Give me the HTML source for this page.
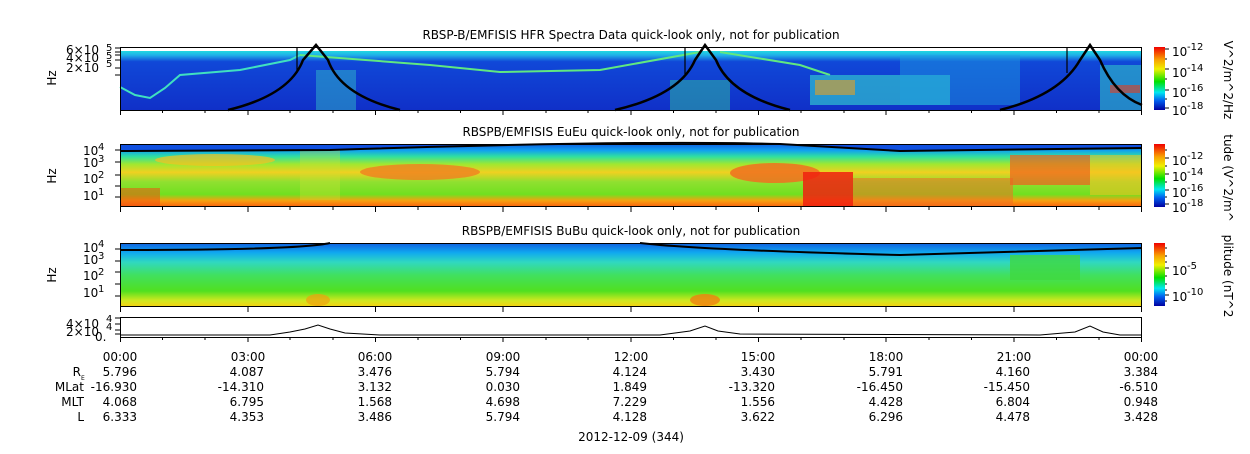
<!DOCTYPE html><html><head><style>body{margin:0;background:#fff;width:1250px;height:449px;overflow:hidden}svg text{font-family:"DejaVu Sans","Liberation Sans",sans-serif;font-size:12px;fill:#000}</style></head><body>
<svg width="1250" height="449" xmlns="http://www.w3.org/2000/svg">
<defs>
<linearGradient id="p1" x1="0" y1="0" x2="0" y2="1"><stop offset="0" stop-color="#20d8e0"/><stop offset=".07" stop-color="#20b0e8"/><stop offset=".18" stop-color="#1048d8"/><stop offset="1" stop-color="#1030c8"/></linearGradient>
<linearGradient id="p2" x1="0" y1="0" x2="0" y2="1"><stop offset="0" stop-color="#1060e0"/><stop offset=".1" stop-color="#10a0f0"/><stop offset=".2" stop-color="#30e0a0"/><stop offset=".32" stop-color="#a0e830"/><stop offset=".45" stop-color="#f0d020"/><stop offset=".6" stop-color="#90e030"/><stop offset=".8" stop-color="#70e020"/><stop offset=".9" stop-color="#f8a010"/><stop offset="1" stop-color="#f86010"/></linearGradient>
<linearGradient id="p3" x1="0" y1="0" x2="0" y2="1"><stop offset="0" stop-color="#1060e0"/><stop offset=".15" stop-color="#10a8f0"/><stop offset=".3" stop-color="#30d8c0"/><stop offset=".5" stop-color="#40e060"/><stop offset=".75" stop-color="#50e020"/><stop offset=".9" stop-color="#d0e820"/><stop offset="1" stop-color="#f8d010"/></linearGradient>
<linearGradient id="cb" x1="0" y1="0" x2="0" y2="1"><stop offset="0" stop-color="#f00000"/><stop offset=".2" stop-color="#f8a000"/><stop offset=".35" stop-color="#f0f000"/><stop offset=".55" stop-color="#00e000"/><stop offset=".72" stop-color="#00e8f0"/><stop offset=".85" stop-color="#0060f0"/><stop offset="1" stop-color="#0000a0"/></linearGradient>
</defs>
<text x="631" y="39" text-anchor="middle">RBSP-B/EMFISIS  HFR Spectra Data quick-look only, not for publication</text>
<text x="631" y="136" text-anchor="middle">RBSPB/EMFISIS  EuEu quick-look only, not for publication</text>
<text x="631" y="235" text-anchor="middle">RBSPB/EMFISIS  BuBu quick-look only, not for publication</text>
<rect x="120" y="51" width="1022" height="59" fill="url(#p1)"/>
<path d="M120 87 L135 95 L150 98 L165 88 L180 75 L240 70 L290 60 L300 55" stroke="#40e0c0" stroke-width="2" fill="none"/>
<path d="M300 55 L430 65 L500 72 L600 70 L700 52" stroke="#60e880" stroke-width="2" fill="none"/>
<path d="M720 52 L800 65 L830 75" stroke="#60e880" stroke-width="2" fill="none"/>
<rect x="810" y="75" width="140" height="30" fill="#30c0d0" opacity=".7"/>
<rect x="815" y="80" width="40" height="15" fill="#e8a020" opacity=".6"/>
<rect x="900" y="55" width="120" height="50" fill="#20a0e0" opacity=".45"/>
<rect x="1100" y="65" width="42" height="45" fill="#30c0c8" opacity=".6"/>
<rect x="1110" y="85" width="30" height="8" fill="#e04020" opacity=".6"/>
<rect x="316" y="70" width="40" height="40" fill="#30b8c8" opacity=".5"/>
<rect x="670" y="80" width="60" height="30" fill="#30c0a0" opacity=".5"/>
<g stroke="#000" stroke-width="2.5" fill="none">
<path d="M228 110 Q290 95 303 60 L316 45 L328 60 Q340 95 400 110"/>
<path d="M615 110 Q680 95 695 60 L705 45 L716 60 Q730 95 790 110"/>
<path d="M1000 110 Q1060 95 1080 60 L1090 45 L1100 60 Q1115 95 1142 105"/>
</g>
<g stroke="#000" stroke-width="1.2"><line x1="297" y1="47" x2="297" y2="73"/><line x1="685" y1="47" x2="685" y2="74"/><line x1="1067" y1="47" x2="1067" y2="73"/></g>
<rect x="120.5" y="47.5" width="1021" height="63" fill="none" stroke="#000"/>
<rect x="120" y="144" width="1022" height="63" fill="url(#p2)"/>
<ellipse cx="420" cy="172" rx="60" ry="8" fill="#f08020" opacity=".8"/>
<ellipse cx="775" cy="173" rx="45" ry="10" fill="#f07020" opacity=".85"/>
<ellipse cx="215" cy="160" rx="60" ry="6" fill="#f8c020" opacity=".7"/>
<rect x="803" y="172" width="50" height="35" fill="#f02010" opacity=".85"/>
<rect x="853" y="178" width="160" height="29" fill="#f07020" opacity=".55"/>
<rect x="1010" y="155" width="80" height="30" fill="#f06020" opacity=".7"/>
<rect x="1090" y="155" width="52" height="40" fill="#f8c020" opacity=".55"/>
<rect x="120" y="188" width="40" height="19" fill="#f05010" opacity=".55"/>
<rect x="300" y="150" width="40" height="50" fill="#d0e030" opacity=".35"/>
<path d="M120 151 L330 150 Q630 140 780 144 L900 151 L1142 148 L1142 144 L120 144Z" fill="#1050e0"/>
<path d="M120 151 L330 150 Q630 140 780 144 L900 151 L1142 148" stroke="#000" stroke-width="2" fill="none"/>
<rect x="120.5" y="144.5" width="1021" height="62" fill="none" stroke="#000"/>
<rect x="120" y="243" width="1022" height="64" fill="url(#p3)"/>
<rect x="1010" y="255" width="70" height="25" fill="#40d840" opacity=".8"/>
<ellipse cx="705" cy="300" rx="15" ry="6" fill="#f08010" opacity=".8"/>
<ellipse cx="318" cy="300" rx="12" ry="6" fill="#f0a010" opacity=".7"/>
<path d="M120 250 Q300 250 330 243 M640 243 Q700 250 900 255 L1142 248" stroke="#000" stroke-width="2" fill="none"/>
<rect x="120.5" y="243.5" width="1021" height="63" fill="none" stroke="#000"/>
<rect x="120.5" y="317.5" width="1021" height="20" fill="none" stroke="#000"/>
<path d="M120 335 L270 335 L290 332 L305 329 L318 325 L330 329 L345 333 L380 335 L660 335 L690 331 L705 326 L718 331 L740 334 L1040 335 L1075 332 L1090 326 L1103 332 L1120 335 L1142 335" stroke="#000" fill="none"/>
<g stroke="#000">
<path d="M120.5 110v5M248 110v5M375.5 110v5M503 110v5M631 110v5M758.5 110v5M886 110v5M1014 110v5M1141.5 110v5M162.5 110v3M205 110v3M290 110v3M333 110v3M418 110v3M460.5 110v3M546 110v3M588 110v3M673.5 110v3M716 110v3M801 110v3M844 110v3M929 110v3M971.5 110v3M1056.5 110v3M1099 110v3"/>
<path d="M120.5 207v5M248 207v5M375.5 207v5M503 207v5M631 207v5M758.5 207v5M886 207v5M1014 207v5M1141.5 207v5M162.5 207v3M205 207v3M290 207v3M333 207v3M418 207v3M460.5 207v3M546 207v3M588 207v3M673.5 207v3M716 207v3M801 207v3M844 207v3M929 207v3M971.5 207v3M1056.5 207v3M1099 207v3"/>
<path d="M120.5 307v5M248 307v5M375.5 307v5M503 307v5M631 307v5M758.5 307v5M886 307v5M1014 307v5M1141.5 307v5"/>
<path d="M120.5 337v5M248 337v5M375.5 337v5M503 337v5M631 337v5M758.5 337v5M886 337v5M1014 337v5M1141.5 337v5M162.5 337v3M205 337v3M290 337v3M333 337v3M418 337v3M460.5 337v3M546 337v3M588 337v3M673.5 337v3M716 337v3M801 337v3M844 337v3M929 337v3M971.5 337v3M1056.5 337v3M1099 337v3"/>
<path d="M115 48h5M115 52h5M115 55h5M115 60h5M115 68h5M115 75h5M115 150h5M115 162h5M115 175h5M115 186h5M115 197h5M115 249h5M115 261h5M115 272h5M115 284h5M115 296h5M115 318h5M115 324h5M115 330h5M115 334h5"/>
</g>
<g>
<text x="66" y="54" style="font-size:12px">6×10</text><text x="66" y="62" style="font-size:12px">4×10</text><text x="66" y="72" style="font-size:12px">2×10</text>
<text x="106" y="51" style="font-size:10px">5</text><text x="106" y="59" style="font-size:10px">5</text><text x="106" y="67" style="font-size:10px">5</text>
<text x="83" y="155">10</text><text x="98" y="150" style="font-size:10px">4</text>
<text x="83" y="167">10</text><text x="98" y="162" style="font-size:10px">3</text>
<text x="83" y="183">10</text><text x="98" y="178" style="font-size:10px">2</text>
<text x="83" y="200">10</text><text x="98" y="195" style="font-size:10px">1</text>
<text x="83" y="252">10</text><text x="98" y="247" style="font-size:10px">4</text>
<text x="83" y="264">10</text><text x="98" y="259" style="font-size:10px">3</text>
<text x="83" y="280">10</text><text x="98" y="275" style="font-size:10px">2</text>
<text x="83" y="297">10</text><text x="98" y="292" style="font-size:10px">1</text>
<text x="66" y="328" style="font-size:12px">4×10</text><text x="66" y="336" style="font-size:12px">2×10</text><text x="95" y="341" style="font-size:12px">0.</text>
<text x="106" y="322" style="font-size:10px">4</text><text x="106" y="330" style="font-size:10px">4</text>
</g>
<text transform="translate(56,78) rotate(-90)" text-anchor="middle">Hz</text>
<text transform="translate(56,176) rotate(-90)" text-anchor="middle">Hz</text>
<text transform="translate(56,275) rotate(-90)" text-anchor="middle">Hz</text>
<rect x="1154" y="47" width="11" height="63" fill="url(#cb)"/>
<rect x="1154" y="144" width="11" height="63" fill="url(#cb)"/>
<rect x="1154" y="243" width="11" height="63" fill="url(#cb)"/>
<g stroke="#000"><path d="M1165 49h4M1165 69h4M1165 90h4M1165 108h4M1165 59h2M1165 79h2M1165 99h2M1165 158h4M1165 174h4M1165 190h4M1165 204h4M1165 150h2M1165 166h2M1165 182h2M1165 197h2M1165 268h4M1165 295h4M1165 248h2M1165 256h2M1165 262h2M1165 276h2M1165 284h2M1165 290h2M1165 301h2"/></g>
<g>
<text x="1172" y="56">10</text><text x="1187" y="50" style="font-size:10px">-12</text>
<text x="1172" y="77">10</text><text x="1187" y="71" style="font-size:10px">-14</text>
<text x="1172" y="97">10</text><text x="1187" y="91" style="font-size:10px">-16</text>
<text x="1172" y="115">10</text><text x="1187" y="109" style="font-size:10px">-18</text>
<text x="1172" y="165">10</text><text x="1187" y="159" style="font-size:10px">-12</text>
<text x="1172" y="181">10</text><text x="1187" y="175" style="font-size:10px">-14</text>
<text x="1172" y="197">10</text><text x="1187" y="191" style="font-size:10px">-16</text>
<text x="1172" y="212">10</text><text x="1187" y="206" style="font-size:10px">-18</text>
<text x="1172" y="275">10</text><text x="1187" y="269" style="font-size:10px">-5</text>
<text x="1172" y="301">10</text><text x="1187" y="295" style="font-size:10px">-10</text>
</g>
<text transform="translate(1224,80) rotate(90)" text-anchor="middle">V^2/m^2/Hz</text>
<text transform="translate(1224,178) rotate(90)" text-anchor="middle">tude (V^2/m^</text>
<text transform="translate(1224,276) rotate(90)" text-anchor="middle">plitude (nT^2</text>
<g text-anchor="middle">
<text x="120" y="361">00:00</text><text x="248" y="361">03:00</text><text x="375" y="361">06:00</text><text x="503" y="361">09:00</text><text x="631" y="361">12:00</text><text x="758" y="361">15:00</text><text x="886" y="361">18:00</text><text x="1014" y="361">21:00</text><text x="1141" y="361">00:00</text>
</g>
<g text-anchor="end">
<text x="137" y="376">5.796</text><text x="264" y="376">4.087</text><text x="392" y="376">3.476</text><text x="520" y="376">5.794</text><text x="647" y="376">4.124</text><text x="775" y="376">3.430</text><text x="903" y="376">5.791</text><text x="1030" y="376">4.160</text><text x="1158" y="376">3.384</text>
<text x="137" y="391">-16.930</text><text x="264" y="391">-14.310</text><text x="392" y="391">3.132</text><text x="520" y="391">0.030</text><text x="647" y="391">1.849</text><text x="775" y="391">-13.320</text><text x="903" y="391">-16.450</text><text x="1030" y="391">-15.450</text><text x="1158" y="391">-6.510</text>
<text x="137" y="406">4.068</text><text x="264" y="406">6.795</text><text x="392" y="406">1.568</text><text x="520" y="406">4.698</text><text x="647" y="406">7.229</text><text x="775" y="406">1.556</text><text x="903" y="406">4.428</text><text x="1030" y="406">6.804</text><text x="1158" y="406">0.948</text>
<text x="137" y="421">6.333</text><text x="264" y="421">4.353</text><text x="392" y="421">3.486</text><text x="520" y="421">5.794</text><text x="647" y="421">4.128</text><text x="775" y="421">3.622</text><text x="903" y="421">6.296</text><text x="1030" y="421">4.478</text><text x="1158" y="421">3.428</text>
<text x="81" y="376">R</text><text x="84" y="406">MLT</text><text x="84" y="421">L</text><text x="84" y="391">MLat</text>
</g>
<text x="81" y="380" style="font-size:6px">E</text>
<text x="631" y="441" text-anchor="middle">2012-12-09 (344)</text>
</svg></body></html>
